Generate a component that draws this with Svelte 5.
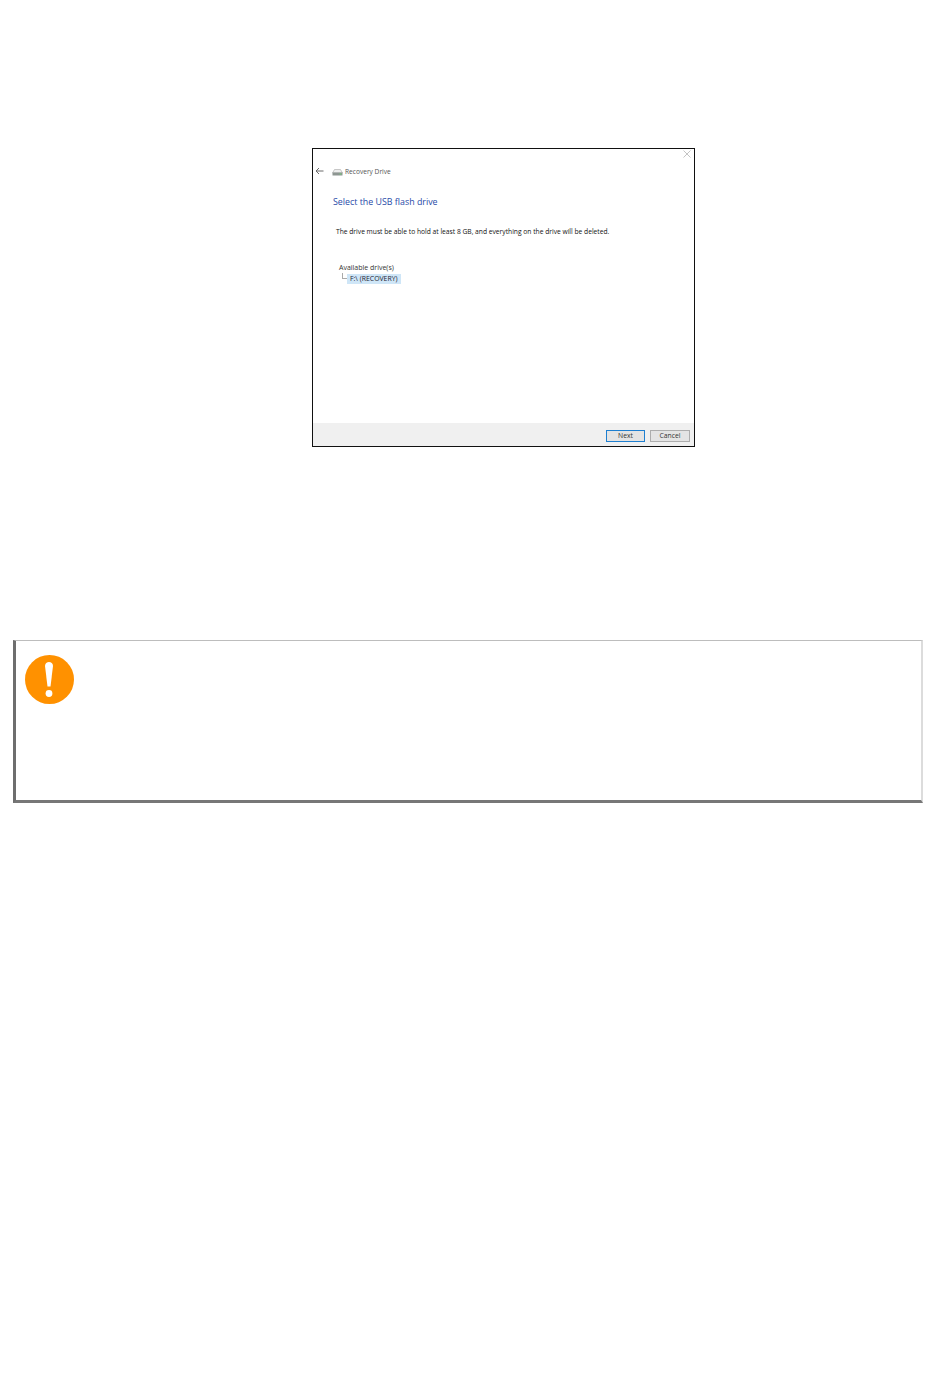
<script lang="ts">
  const closeColor = '#b5b5b5';
</script>

<div class="page">
  <div class="window">
    <div class="window__main">
      <svg class="close" width="8" height="8" viewBox="0 0 8 8" aria-hidden="true">
        <path d="M.5.5l7 7M7.500.5l-7 7" fill="none" stroke={closeColor} stroke-width=".8" />
      </svg>

      <div class="nav">
        <svg class="back" width="9" height="8" viewBox="0 0 9 8" aria-hidden="true">
          <path d="M8.500 4H1M4 1L1 4l3 3" fill="none" stroke="#6a6a6a" stroke-width="1" />
        </svg>
        <svg class="drive" width="11" height="7" viewBox="0 0 11 7" aria-hidden="true">
          <path d="M2.500.5h6L10.500 4H.5z" fill="#eeeeee" stroke="#a8a8a8" stroke-width=".6" />
          <rect x=".5" y="3.500" width="10" height="3" fill="#8e9692" />
          <rect x="7.500" y="4.500" width="2" height="1" fill="#6fcf7a" />
        </svg>
        <span class="nav__title">Recovery Drive</span>
      </div>

      <h1>Select the USB flash drive</h1>
      <p class="hint">The drive must be able to hold at least 8 GB, and everything on the drive will be deleted.</p>

      <div class="drives">
        <div class="drives__label">Available drive(s)</div>
        <div class="drives__row">
          <span class="tree"></span>
          <span class="selected">F:\ (RECOVERY)</span>
        </div>
      </div>
    </div>

    <div class="window__footer">
      <button class="btn btn--primary">Next</button>
      <button class="btn">Cancel</button>
    </div>
  </div>

  <div class="callout">
    <svg width="49" height="49" viewBox="0 0 49 49" aria-hidden="true">
      <circle cx="24.500" cy="24.500" r="24.500" fill="#ff9100" />
      <path d="M20 11c0-5.500 8-5.500 8 0L25.500 31.500h-3z" fill="#fff" />
      <circle cx="24" cy="38.500" r="3.400" fill="#fff" />
    </svg>
  </div>
</div>

<style>
  :global(body) {
    background: #fff;
  }

  .page {
    box-sizing: border-box;
    height: 1383px;
    padding-top: 148px;
    font-family: "Open Sans", "Liberation Sans", Arial, sans-serif;
  }

  .window {
    box-sizing: border-box;
    display: flex;
    flex-direction: column;
    width: 383px;
    height: 299px;
    margin-left: 312px;
    border: 1px solid #111;
    color: #333;
  }

  .window__main {
    position: relative;
    flex: 1;
    padding: 17px 0 0 2px;
  }

  .close {
    position: absolute;
    top: 1px;
    right: 3px;
  }

  .nav {
    display: flex;
    align-items: center;
    height: 10px;
    font-size: 6.600px;
    color: #555;
  }

  .back {
    margin-right: 8px;
  }

  .drive {
    margin: 2px 2px 0 0;
  }

  h1 {
    margin: 20px 0 0 18px;
    font-size: 8.850px;
    line-height: 12px;
    font-weight: 400;
    color: #1f4aa8;
  }

  .hint {
    margin: 19px 0 0 21px;
    font-size: 6.700px;
    line-height: 9px;
    color: #111;
  }

  .drives {
    margin: 27px 0 0 24px;
    font-size: 7px;
    line-height: 10px;
  }

  .drives__row {
    display: flex;
    align-items: center;
    height: 11px;
    margin: 0 0 0 3px;
  }

  .tree {
    flex: none;
    width: 4px;
    height: 5px;
    margin: -5px 0 0 0;
    border-left: 1px solid #aaa;
    border-bottom: 1px solid #aaa;
  }

  .selected {
    padding: 0 3px;
    background: #cfe6f7;
    font-size: 6.900px;
    line-height: 10px;
    color: #223;
  }

  .window__footer {
    display: flex;
    justify-content: flex-end;
    gap: 5px;
    box-sizing: border-box;
    height: 23px;
    padding: 7px 4px 0 0;
    background: #f0f0f0;
  }

  .btn {
    box-sizing: border-box;
    width: 40px;
    height: 12px;
    padding: 0;
    border: 1px solid #adadad;
    background: #e4e4e4;
    font: 6.800px/10px "Open Sans", "Liberation Sans", Arial, sans-serif;
    color: #333;
  }

  .btn--primary {
    width: 39px;
    border-color: #1e7fd0;
  }

  .callout {
    box-sizing: border-box;
    width: 910px;
    height: 163px;
    margin: 193px 0 0 13px;
    padding: 14px 0 0 9px;
    border-style: solid;
    border-color: #bdbdbd #dcdcdc #777 #6e6e6e;
    border-width: 1px 2px 3px 3px;
  }

  .callout svg {
    display: block;
  }
</style>
